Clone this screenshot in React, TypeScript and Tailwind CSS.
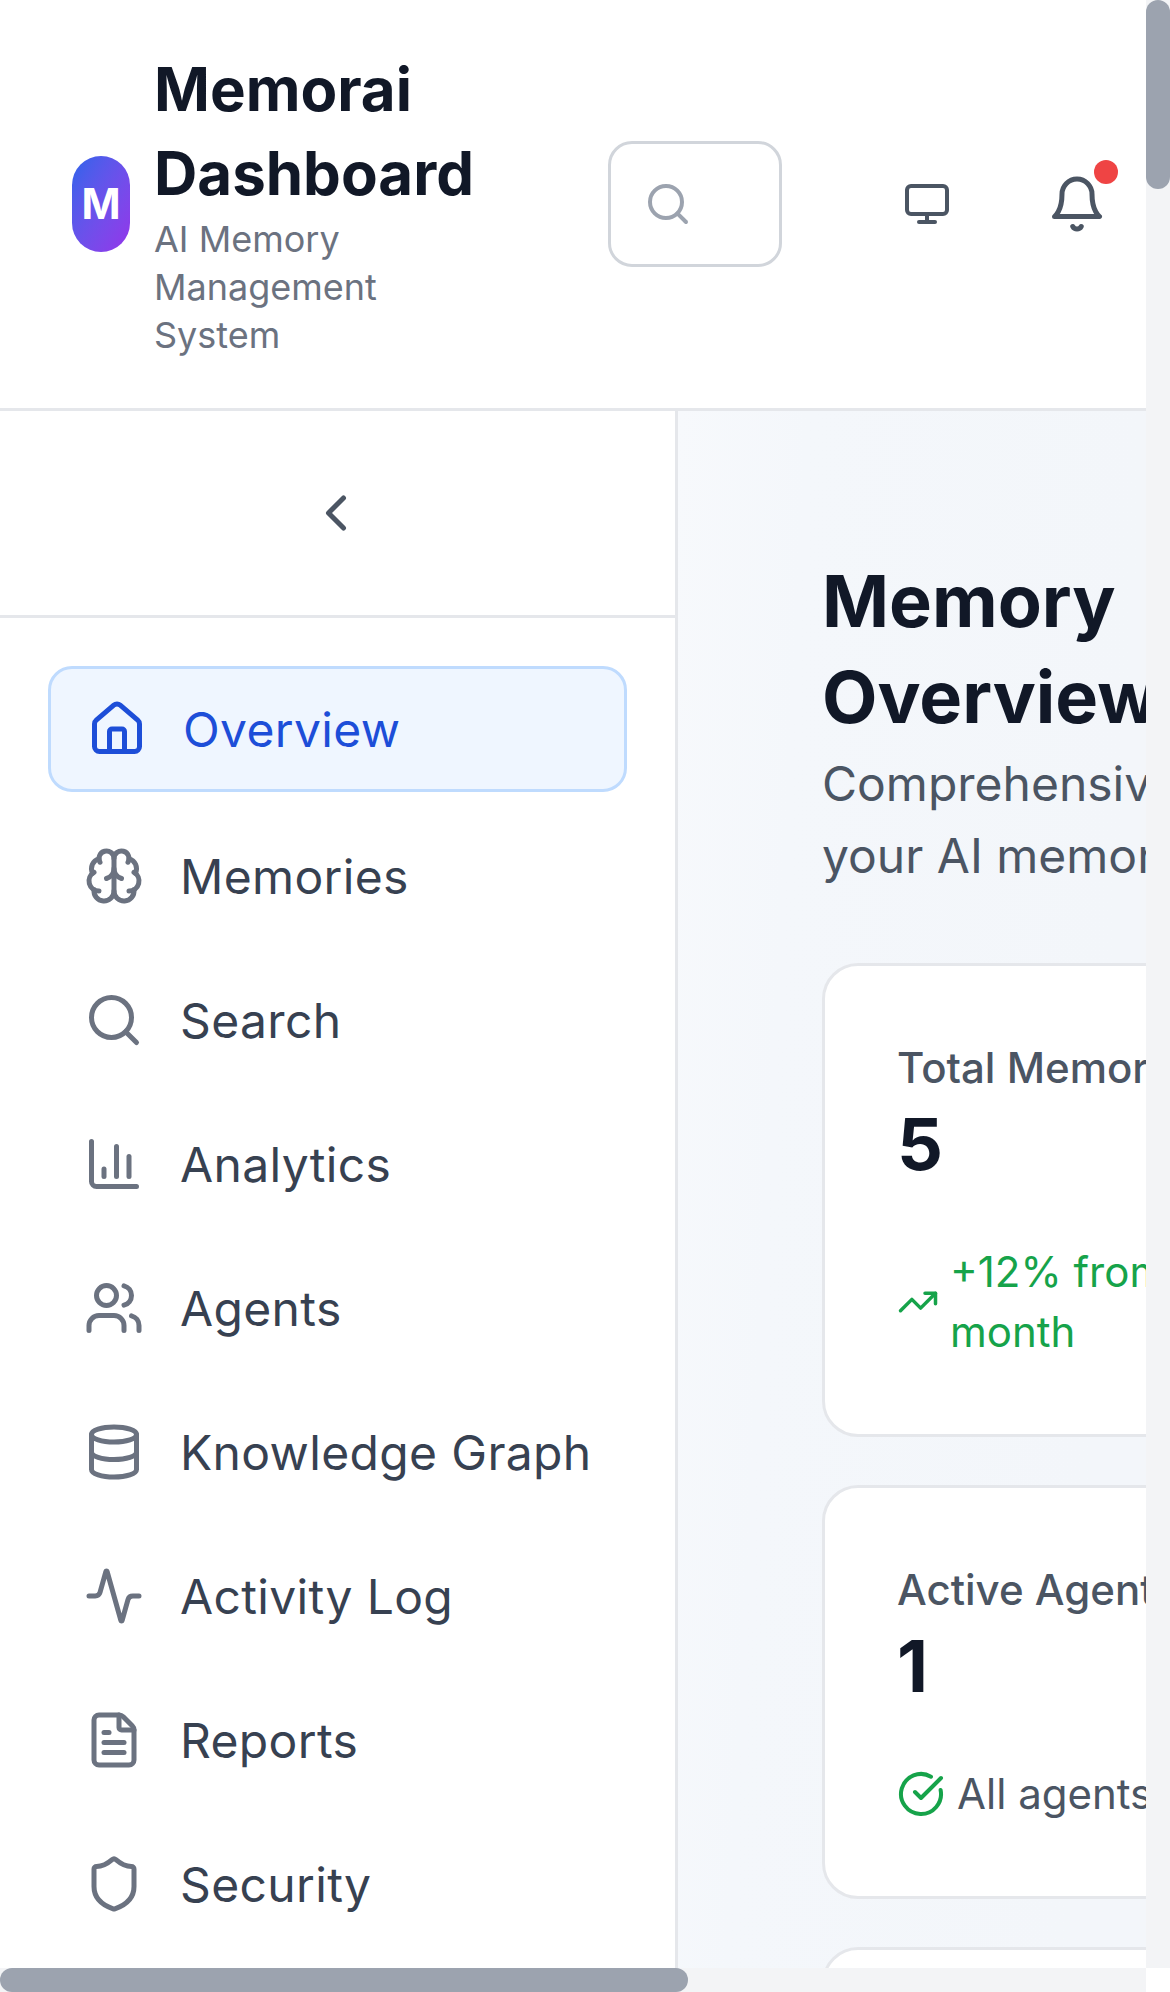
import React from 'react';
import {
  Activity,
  Brain,
  ChartColumn,
  ChevronLeft,
  CircleCheckBig,
  Database,
  FileText,
  House,
  Monitor,
  Search,
  Shield,
  TrendingUp,
  Users,
} from 'lucide-react';

const navItems = [
  { label: 'Memories', icon: Brain },
  { label: 'Search', icon: Search },
  { label: 'Analytics', icon: ChartColumn },
  { label: 'Agents', icon: Users },
  { label: 'Knowledge Graph', icon: Database },
  { label: 'Activity Log', icon: Activity },
  { label: 'Reports', icon: FileText },
  { label: 'Security', icon: Shield },
];

const App: React.FC = () => {
  return (
    <div className="flex w-[1170px] h-[1992px] overflow-hidden bg-white font-['Inter',sans-serif]">
      <div className="flex flex-col w-[1146px] h-full shrink-0">
        <div className="flex flex-col flex-1 min-h-0 overflow-hidden">
          <header className="flex items-center h-[411px] shrink-0 pl-[72px] border-b-[3px] border-[#e5e7eb] bg-white">
            <div className="flex items-center justify-center w-[58px] h-[96px] shrink-0 rounded-[29px] bg-gradient-to-br from-[#2563eb] to-[#9333ea]">
              <span className="text-white font-bold text-[42px] leading-[60px]">M</span>
            </div>
            <div className="w-[340px] ml-[24px] mb-[2px] shrink-0">
              <h1 className="text-[60px] leading-[84px] font-bold text-[#111827]">Memorai Dashboard</h1>
              <p className="text-[36px] leading-[48px] text-[#6b7280]">AI Memory Management System</p>
            </div>
            <div className="flex items-center w-[174px] h-[126px] ml-[114px] shrink-0 pl-[33px] rounded-[24px] border-[3px] border-[#d1d5db]">
              <Search size={48} strokeWidth={2} className="text-[#9ca3af]" />
            </div>
            <Monitor size={48} strokeWidth={2} className="ml-[121px] shrink-0 text-[#4b5563]" />
            <div className="relative ml-[96px] shrink-0">
              <svg width="60" height="60" viewBox="0 0 24 24" fill="none" stroke="#4b5563" strokeWidth="2" strokeLinecap="round" strokeLinejoin="round">
                <path d="M6 8a6 6 0 0 1 12 0c0 7 3 9 3 9H3s3-2 3-9" />
                <path d="M10.3 21a1.94 1.94 0 0 0 3.4 0" />
              </svg>
              <span className="absolute right-[-11px] top-[-14px] w-[24px] h-[24px] rounded-full bg-[#ef4444]" />
            </div>
          </header>

          <div className="flex flex-1 min-h-0">
            <aside className="w-[678px] shrink-0 border-r-[3px] border-[#e5e7eb] bg-white">
              <div className="flex items-center justify-center h-[207px] pr-[3px] border-b-[3px] border-[#e5e7eb]">
                <ChevronLeft size={60} strokeWidth={2} className="text-[#4b5563]" />
              </div>
              <nav className="flex flex-col p-[48px]">
                <a className="flex items-center gap-[36px] h-[126px] mb-[12px] px-[36px] rounded-[24px] border-[3px] border-[#bfdbfe] bg-[#eff6ff] text-[#1d4ed8]">
                  <House size={60} strokeWidth={2} className="shrink-0" />
                  <span className="pt-[2px] text-[48px] leading-[72px] tracking-[0.35px]">Overview</span>
                </a>
                {navItems.map((item) => (
                  <a key={item.label} className="flex items-center gap-[36px] h-[144px] px-[36px] text-[#374151]">
                    <item.icon size={60} strokeWidth={2} className="shrink-0 text-[#6b7280]" />
                    <span className="pt-[2px] text-[48px] leading-[72px] tracking-[0.35px] whitespace-nowrap">{item.label}</span>
                  </a>
                ))}
              </nav>
            </aside>

            <main className="flex-1 min-w-0 overflow-hidden bg-[linear-gradient(93deg,#f7f9fc_0px,#f4f7fb_130px,#f3f6fa_468px)] pt-[142px] pl-[144px]">
              <div className="w-[760px]">
                <h2 className="w-[340px] text-[72px] leading-[96px] font-bold text-[#111827]">Memory Overview</h2>
                <p className="w-[680px] mt-[3px] text-[48px] leading-[72px] text-[#4b5563]">Comprehensive overview of your AI memory system</p>

                <div className="flex flex-col gap-[48px] mt-[71px]">
                  <div className="rounded-[36px] border-[3px] border-[#e5e7eb] bg-white p-[72px]">
                    <p className="text-[42px] leading-[60px] font-medium text-[#4b5563] whitespace-nowrap">Total Memories</p>
                    <p className="-mt-[2px] text-[72px] leading-[96px] font-bold text-[#111827]">5</p>
                    <div className="flex items-center gap-[11px] mt-[50px] text-[#16a34a]">
                      <TrendingUp size={42} strokeWidth={2} className="shrink-0" />
                      <span className="w-[400px] text-[42px] leading-[60px]">+12% from last month</span>
                    </div>
                  </div>

                  <div className="rounded-[36px] border-[3px] border-[#e5e7eb] bg-white p-[72px]">
                    <p className="text-[42px] leading-[60px] font-medium text-[#4b5563] whitespace-nowrap">Active Agents</p>
                    <p className="-mt-[2px] text-[72px] leading-[96px] font-bold text-[#111827]">1</p>
                    <div className="flex items-center gap-[12px] mt-[50px]">
                      <CircleCheckBig size={48} strokeWidth={2} className="shrink-0 text-[#16a34a]" />
                      <span className="text-[42px] leading-[60px] text-[#4b5563] whitespace-nowrap">All agents online</span>
                    </div>
                  </div>

                  <div className="h-[414px] rounded-[36px] border-[3px] border-[#e5e7eb] bg-white" />
                </div>
              </div>
            </main>
          </div>
        </div>

        <div className="h-[24px] shrink-0 bg-[#f3f4f6]">
          <div className="w-[688px] h-full rounded-full bg-[#9ca3af]" />
        </div>
      </div>

      <div className="flex flex-col w-[24px] h-full shrink-0">
        <div className="flex-1 bg-[#f3f4f6]">
          <div className="w-full h-[189px] rounded-full bg-[#9ca3af]" />
        </div>
        <div className="h-[24px] shrink-0 bg-white" />
      </div>
    </div>
  );
};

export default App;
